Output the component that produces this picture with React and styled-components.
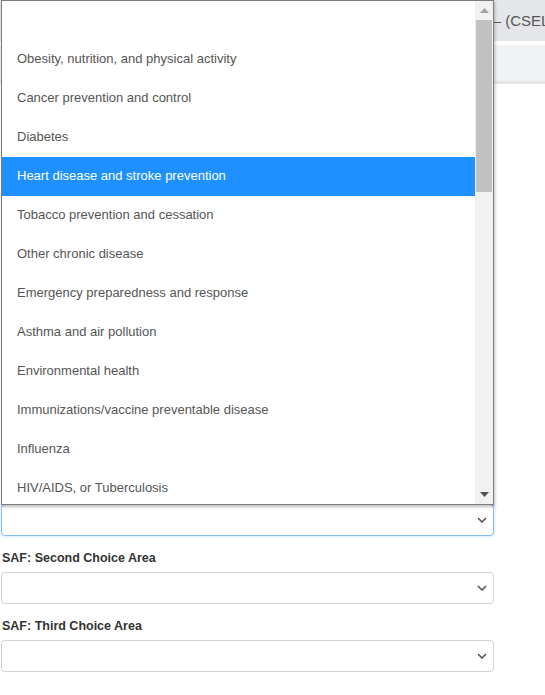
import React from 'react'
import styled, { createGlobalStyle } from 'styled-components'

const options = [
    '',
    'Obesity, nutrition, and physical activity',
    'Cancer prevention and control',
    'Diabetes',
    'Heart disease and stroke prevention',
    'Tobacco prevention and cessation',
    'Other chronic disease',
    'Emergency preparedness and response',
    'Asthma and air pollution',
    'Environmental health',
    'Immunizations/vaccine preventable disease',
    'Influenza',
    'HIV/AIDS, or Tuberculosis',
]

const Chevron = () => (
    <svg width="10" height="6" viewBox="0 0 10 6">
        <path d="M1 1l4 4 4-4" fill="none" stroke="#555" strokeWidth="1.6" />
    </svg>
)

const App = () => {
    return (
        <Page>
            <GlobalStyle />
            <Header>
                <Title>Fellowship Placement Form (2020) – (CSELS)</Title>
            </Header>
            <SubBar />

            <Content>
                {/* the upper part of the form is hidden under the open listbox */}
                <Covered />

                <Field>
                    <Select focused>
                        <Chevron />
                    </Select>
                </Field>
                <Field>
                    <Label>SAF: Second Choice Area</Label>
                    <Select>
                        <Chevron />
                    </Select>
                </Field>
                <Field>
                    <Label>SAF: Third Choice Area</Label>
                    <Select>
                        <Chevron />
                    </Select>
                </Field>
            </Content>

            {/* open listbox of the first choice select */}
            <Listbox>
                <OptionList>
                    {options.map((o, i) => (
                        <Option key={i} selected={i === 4}>{o}</Option>
                    ))}
                </OptionList>
                <Scrollbar>
                    <Arrow>
                        <svg width="9" height="5" viewBox="0 0 9 5"><path d="M0 5L4.5 0 9 5z" fill="#a3a3a3" /></svg>
                    </Arrow>
                    <Track>
                        <Thumb />
                    </Track>
                    <Arrow>
                        <svg width="9" height="5" viewBox="0 0 9 5"><path d="M0 0h9L4.5 5z" fill="#505050" /></svg>
                    </Arrow>
                </Scrollbar>
            </Listbox>
        </Page>
    )
}

export default App

const GlobalStyle = createGlobalStyle`
    html, body {
        margin: 0;
        padding: 0;
        background: #fff;
        font-family: "Liberation Sans", Arial, sans-serif;
    }
`

const Page = styled.div`
    position: relative;
    width: 545px;
    height: 695px;
    overflow: hidden;
`

const Header = styled.div`
    height: 41px;
    background: #e4e6e9;
    display: flex;
    align-items: center;
    overflow: hidden;
    margin-bottom: 4px;
`

const Title = styled.div`
    white-space: nowrap;
    font-size: 15px;
    color: #555;
    padding-left: 256px;
`

const SubBar = styled.div`
    height: 36px;
    background: #f0f1f3;
    border-bottom: 3px solid #e6e6e6;
`

const Content = styled.div`
    padding: 0 0 0 1px;
`

const Covered = styled.div`
    height: 420px;
`

const Field = styled.div`
    margin-bottom: 14px;
`

const Label = styled.div`
    font-size: 12.5px;
    font-weight: bold;
    color: #333;
    line-height: 17px;
    margin: 0 0 5px 1px;
`

const Select = styled.div`
    box-sizing: border-box;
    width: 493px;
    height: 32px;
    border: 1px solid ${(p) => (p.focused ? '#86bdf5' : '#d4d4d4')};
    border-radius: 4px;
    box-shadow: ${(p) => (p.focused ? '0 0 0 2px rgba(0, 123, 255, 0.08)' : 'none')};
    display: flex;
    align-items: center;
    justify-content: flex-end;
    padding-right: 6px;
    background: #fff;
`

const Listbox = styled.div`
    position: absolute;
    left: 1px;
    top: 0;
    box-sizing: border-box;
    width: 493px;
    height: 505px;
    border: 1px solid #7d7d7d;
    background: #fff;
    display: flex;
    box-shadow: 1px 2px 3px rgba(0, 0, 0, 0.25);
    overflow: hidden;
`

const OptionList = styled.div`
    flex: 1;
`

const Option = styled.div`
    height: 39px;
    box-sizing: border-box;
    line-height: 38px;
    padding: 0 0 1px 15px;
    font-size: 13px;
    white-space: nowrap;
    color: ${(p) => (p.selected ? '#fff' : '#555')};
    background: ${(p) => (p.selected ? '#1e90ff' : 'transparent')};
`

const Scrollbar = styled.div`
    width: 18px;
    background: #f1f1f1;
    display: flex;
    flex-direction: column;
`

const Arrow = styled.div`
    height: 19px;
    display: flex;
    align-items: center;
    justify-content: center;
`

const Track = styled.div`
    flex: 1;
    padding: 0 1px;
`

const Thumb = styled.div`
    height: 172px;
    background: #c1c1c1;
`
